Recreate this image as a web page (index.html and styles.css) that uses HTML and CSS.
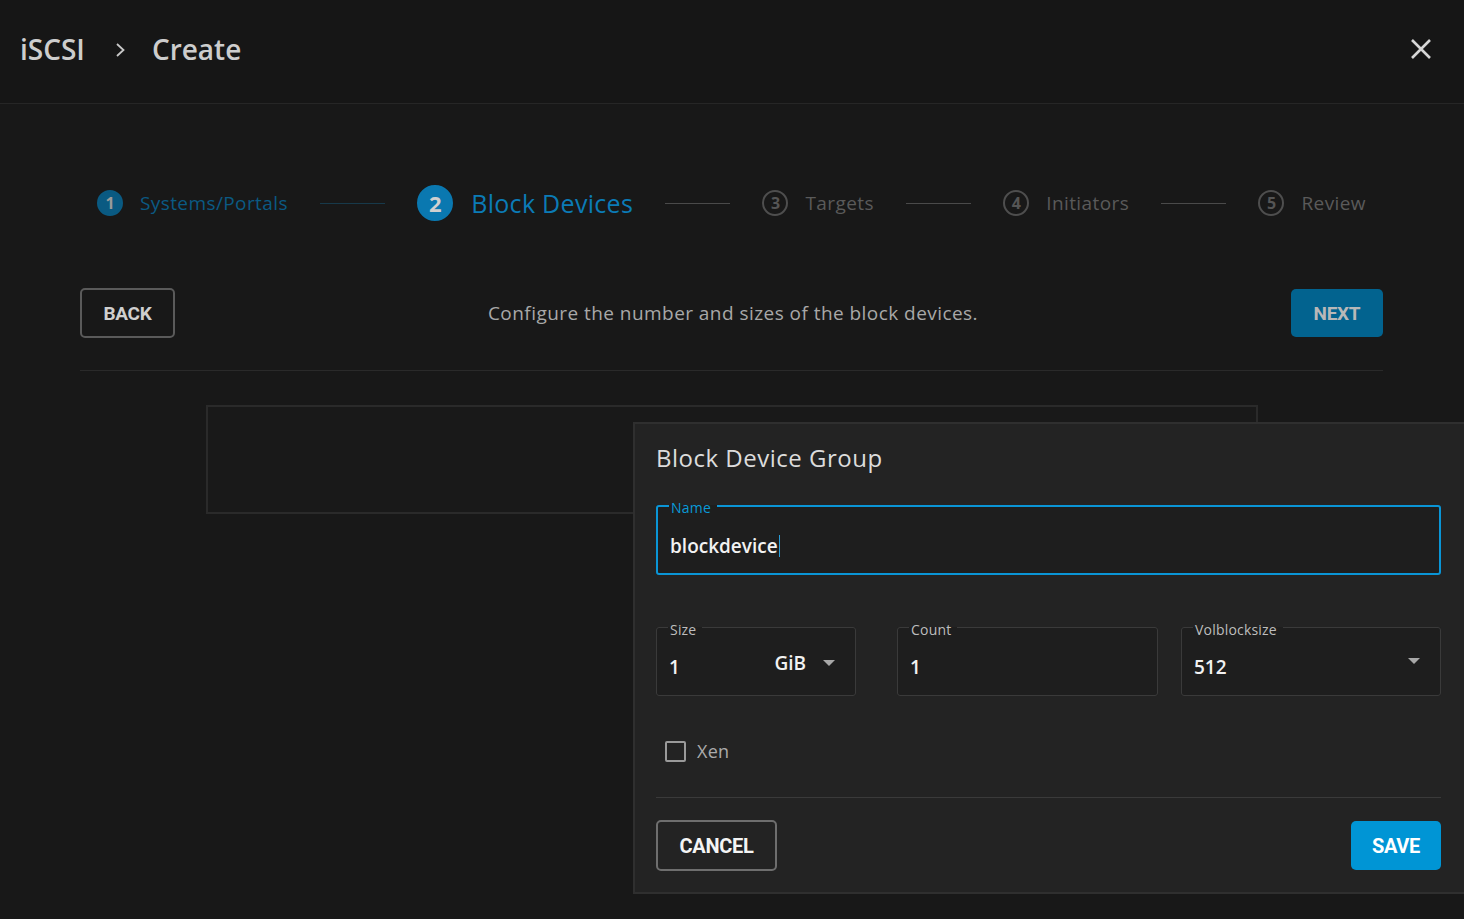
FILE: index.html
```html
<!DOCTYPE html>
<html lang="en">
<head>
<meta charset="utf-8">
<title>iSCSI Create</title>
<link rel="stylesheet" href="styles.css">
</head>
<body>
<div class="app">
  <header class="topbar">
    <div class="crumbs">
      <span class="crumb">iSCSI</span>
      <svg class="chev" width="14" height="16" viewBox="0 0 14 16"><path d="M4 2 L10.5 8 L4 14" fill="none" stroke="#c8c8c8" stroke-width="1.8"/></svg>
      <span class="crumb">Create</span>
    </div>
    <svg class="close" width="22" height="22" viewBox="0 0 22 22"><path d="M2 2 L20 20 M20 2 L2 20" stroke="#d6d6d6" stroke-width="2.6"/></svg>
  </header>

  <main class="content">
    <div class="stepper">
      <div class="step done"><span class="num">1</span><span class="label">Systems/Portals</span></div>
      <div class="line done"></div>
      <div class="step active"><span class="num">2</span><span class="label">Block Devices</span></div>
      <div class="line"></div>
      <div class="step"><span class="num">3</span><span class="label">Targets</span></div>
      <div class="line"></div>
      <div class="step"><span class="num">4</span><span class="label">Initiators</span></div>
      <div class="line"></div>
      <div class="step"><span class="num">5</span><span class="label">Review</span></div>
    </div>

    <div class="actions">
      <button class="btn btn-outline back">BACK</button>
      <p class="hint">Configure the number and sizes of the block devices.</p>
      <button class="btn btn-next">NEXT</button>
    </div>
    <div class="divider"></div>

    <div class="card"></div>
  </main>

  <section class="dialog">
    <h2 class="dlg-title">Block Device Group</h2>
    <fieldset class="field focused">
      <legend>Name</legend>
      <div class="value">blockdevice<span class="caret"></span></div>
    </fieldset>

    <div class="row">
      <fieldset class="field size">
        <legend>Size</legend>
        <div class="value split"><span>1</span><span class="unit">GiB<svg width="14" height="8" viewBox="0 0 14 8"><path d="M1 1 H13 L7 7 Z" fill="#a8a8a8"/></svg></span></div>
      </fieldset>
      <fieldset class="field count">
        <legend>Count</legend>
        <div class="value">1</div>
      </fieldset>
      <fieldset class="field vbs">
        <legend>Volblocksize</legend>
        <div class="value split"><span>512</span><svg class="dd" width="14" height="8" viewBox="0 0 14 8"><path d="M1 1 H13 L7 7 Z" fill="#a8a8a8"/></svg></div>
      </fieldset>
    </div>

    <label class="check"><span class="box"></span><span>Xen</span></label>

    <div class="dlg-divider"></div>

    <div class="dlg-actions">
      <button class="btn btn-outline cancel">CANCEL</button>
      <button class="btn btn-save">SAVE</button>
    </div>
  </section>
</div>
</body>
</html>
```

FILE: styles.css
```css
* { box-sizing: border-box; }
html, body { margin: 0; padding: 0; }
body {
  background: #181818;
  font-family: "Open Sans", "Noto Sans", sans-serif;
  color: #cfcfcf;
  width: 1464px;
  height: 919px;
  overflow: hidden;
}
.app { position: relative; width: 1464px; height: 919px; }

.topbar {
  height: 104px;
  background: #161616;
  border-bottom: 1px solid #262626;
  display: flex;
  align-items: center;
  justify-content: space-between;
  padding: 0 32px 5px 20px;
}
.crumbs { display: flex; align-items: center; }
.crumb { font-size: 28px; font-weight: 600; color: #cdcdcd; letter-spacing: 0; }
.chev { margin: 2px 25px 0 28px; }

.content { padding: 0 81px 0 80px; }

.stepper {
  display: flex;
  align-items: center;
  justify-content: space-between;
  padding: 0 17px;
  height: 198px;
}
.step { display: flex; align-items: center; gap: 17px; }
.num {
  width: 26px; height: 26px; border-radius: 50%;
  border: 2px solid #4e4e4e;
  color: #555;
  font-size: 16px;
  font-weight: 700;
  display: flex; align-items: center; justify-content: center;
}
.label { font-size: 19px; font-weight: 500; color: #5a5a5a; letter-spacing: 0.4px; }
.step.done .num { background: #0a5a82; border-color: #0a5a82; color: #9a9a9a; }
.step.done .label { color: #0b5a83; }
.step.active { gap: 18px; }
.step.active .num { width: 36px; height: 36px; background: #0a78b0; border-color: #0a78b0; color: #d0d0d0; font-size: 22px; }
.step.active .label { color: #0b7bb6; font-size: 25px; font-weight: 500; letter-spacing: 0.3px; }
.line { width: 65px; height: 1px; background: #4a4a4a; }
.line.done { background: #17394a; }

.actions {
  display: flex;
  align-items: center;
  justify-content: space-between;
  margin-top: -14px;
}
.btn {
  font-family: Roboto, "Liberation Sans", sans-serif;
  font-weight: 700;
  font-size: 19px;
  border-radius: 5px;
  cursor: pointer;
  letter-spacing: -0.3px;
}
.btn-outline { background: transparent; border: 2px solid #5a5a5a; color: #cfcfcf; }
.back { width: 95px; height: 50px; }
.btn-next { width: 92px; height: 48px; background: #02638f; border: none; color: #b8b8b8; }
.hint { margin: 0; font-size: 19px; font-weight: 500; color: #a8a8a8; letter-spacing: 0.45px; }

.divider { height: 1px; background: #2a2a2a; margin-top: 32px; }

.card {
  width: 1052px;
  height: 109px;
  margin: 34px auto 0;
  border: 2px solid #2a2a2a;
  background: #191919;
}

.dialog {
  position: absolute;
  left: 633px;
  top: 422px;
  width: 831px;
  height: 472px;
  background: #232323;
  border: 2px solid #2f2f2f;
  border-right: none;
  padding: 16px 23px 0 21px;
}
.dlg-title { margin: 0; font-size: 24px; font-weight: 500; color: #dcdcdc; letter-spacing: 0.5px; line-height: 36px; }

.field {
  margin: 0;
  border: 2px solid #3a3a3a;
  border-radius: 3px;
  background: #1e1e1e;
  padding: 0 12px;
  min-width: 0;
}
.field legend { font-size: 14px; font-weight: 500; color: #bdbdbd; padding: 6px 6px 0 2px; margin-left: -1px; line-height: 14px; letter-spacing: 0.2px; }
.field .value { font-size: 19px; font-weight: 600; color: #f2f2f2; display: flex; align-items: center; }

.field.focused { margin-top: 21px; height: 78px; border-color: #0a95d6; }
.field.focused legend { color: #0a9ad8; padding-top: 4px; }
.field.focused .value { height: 58px; padding-top: 4px; }
.caret { display: inline-block; width: 1px; height: 22px; background: #2a9ed8; margin-left: 1px; }

.row { display: flex; margin-top: 42px; }
.row .field { border-width: 1.5px; height: 79px; }
.row .field .value { height: 60px; }
.field.size { width: 200px; }
.field.count { width: 261px; margin-left: 41px; }
.field.vbs { flex: 1; margin-left: 23px; }
.split { justify-content: space-between; }
.unit { display: flex; align-items: center; gap: 16px; font-weight: 600; margin-top: -8px; margin-right: 7px; }
.dd { margin-top: -12px; margin-right: 7px; }

.check { display: flex; align-items: center; gap: 11px; margin: 43px 0 0 9px; font-size: 18px; font-weight: 500; color: #ababab; letter-spacing: 0.3px; }
.box { width: 21px; height: 21px; border: 2px solid #9a9a9a; border-radius: 2px; }

.dlg-divider { height: 1px; background: #3a3a3a; margin-top: 34px; }

.dlg-actions { display: flex; justify-content: space-between; align-items: center; margin-top: 22px; }
.cancel { width: 121px; height: 51px; border-color: #6e6e6e; color: #f4f4f4; font-size: 20px; }
.btn-save { width: 90px; height: 49px; background: #0095d5; border: none; color: #ffffff; font-size: 20px; }
```
